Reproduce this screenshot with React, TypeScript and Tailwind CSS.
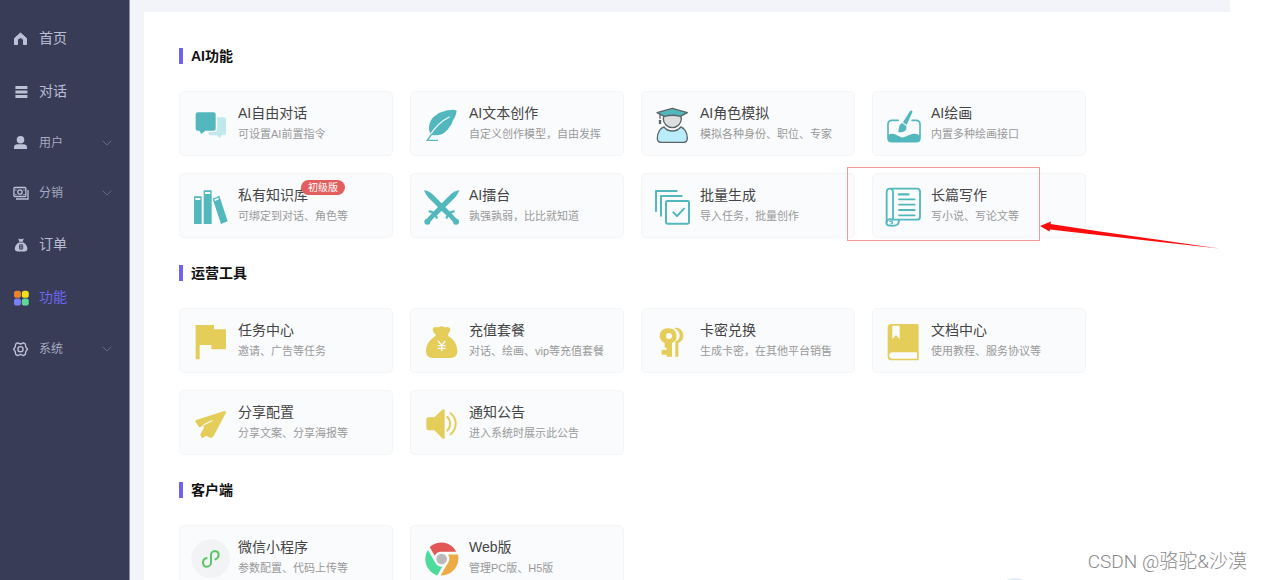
import { ReactNode } from 'react';
import { ChevronDown } from 'lucide-react';

type NavItem = {
    label: string;
    icon: ReactNode;
    active?: boolean;
    expandable?: boolean;
};

type Feature = {
    title: string;
    desc: string;
    icon: ReactNode;
    badge?: string;
    highlighted?: boolean;
};

const TEAL = '#53b8be';
const GOLD = '#e5cd5a';

const navItems: NavItem[] = [
    {
        label: '首页',
        icon: (
            <path
                fill="currentColor"
                stroke="currentColor"
                strokeLinejoin="round"
                d="M7.5 2 1.500 7.300V13.500h3V9.800a3 3 0 0 1 6 0v3.700h3V7.300z"
            />
        ),
    },
    {
        label: '对话',
        icon: (
            <path
                fill="currentColor"
                d="M2.400 2h12v3h-12zM2.400 6.500h12v3h-12zM2.400 11h12v3h-12z"
            />
        ),
    },
    {
        label: '用户',
        expandable: true,
        icon: (
            <g fill="currentColor">
                <circle cx="7.5" cy="4.8" r="3.8" />
                <path d="M1 14v-2c0-1.800 1.600-2.800 3.400-2.800h6.200c1.800 0 3.400 1 3.400 2.800v2z" />
            </g>
        ),
    },
    {
        label: '分销',
        expandable: true,
        icon: (
            <g fill="none" stroke="currentColor" strokeWidth="1.3">
                <rect x="0.900" y="2.500" width="12" height="9" rx="1" />
                <path d="M15 5v9H3" />
                <circle cx="6.900" cy="7" r="2.200" />
                <path d="M2.800 4.600v1M11 4.600v1M2.800 9v1M11 9v1" />
            </g>
        ),
    },
    {
        label: '订单',
        icon: (
            <>
                <path
                    fill="currentColor"
                    d="M5.300 1.500 8 2.200l2.700-.7-1 3.200H6.300zM5.800 5.500h4.600c2.400 1.500 4 4 4 6 0 2-1.200 3-3 3H4.800c-1.800 0-3-1-3-3 0-2 1.600-4.500 4-6z"
                />
                <path
                    fill="none"
                    stroke="#393c57"
                    strokeWidth="0.8"
                    d="M6.500 7.800h3.200v4.200H6.500zM6.500 9.900h3.200M8.100 7.800V13"
                />
            </>
        ),
    },
    {
        label: '功能',
        active: true,
        icon: (
            <>
                <rect x="1" y="0.800" width="7" height="7" rx="2.600" fill="#e98528" />
                <rect x="8.800" y="0.800" width="7" height="7" rx="2.600" fill="#efe01c" />
                <rect x="1" y="8.500" width="7" height="7" rx="2.600" fill="#7b7ef5" />
                <rect x="8.800" y="8.500" width="7" height="7" rx="2.600" fill="#5fd896" />
            </>
        ),
    },
    {
        label: '系统',
        expandable: true,
        icon: (
            <g fill="none" stroke="currentColor" strokeWidth="1.4" strokeLinejoin="round">
                <path d="M4.600 1.800 7.500 3l2.900-1.200 1.900 1.200.5 2.800 1.700 2.400-1.700 2.400-.5 2.800-1.900 1.200-2.900-1.200-2.900 1.200-1.900-1.200-.5-2.800L.7 8.200l1.500-2.400.5-2.800z" />
                <circle cx="7.500" cy="8.200" r="2.600" />
            </g>
        ),
    },
];

const Sword = () => (
    <>
        <path d="M9 12C18 14 28 19 34 24L90 80 80 92 24 37C18 30 12 21 9 12z" />
        <path
            d="M77 95c1-5 4-4 7-7s5-7 6-9 4-2 8-3"
            fill="none"
            stroke={TEAL}
            strokeWidth="7"
            strokeLinecap="round"
        />
        <path
            d="M84 84 105 107"
            fill="none"
            stroke={TEAL}
            strokeWidth="14"
            strokeLinecap="round"
        />
        <circle cx="105" cy="107" r="9" />
    </>
);

const aiFeatures: Feature[] = [
    {
        title: 'AI自由对话',
        desc: '可设置AI前置指令',
        icon: (
            <>
                <path
                    fill="#bfe9ec"
                    d="M82 40h20q6 0 6 6v42q0 6-6 6h-7l-6 8-9-8H62q-6 0-6-6v-4h19q7 0 7-7z"
                />
                <path
                    fill={TEAL}
                    d="M23 25h48q6 0 6 6v43q0 6-6 6H46l-12 10-6-10h-5q-6 0-6-6V31q0-6 6-6z"
                />
            </>
        ),
    },
    {
        title: 'AI文本创作',
        desc: '自定义创作模型，自由发挥',
        icon: (
            <>
                <path
                    fill={TEAL}
                    d="M107 20C98 15 89 19 82 19 74 19 70 23 62 24 52 26 48 32 41 36 29 46 21 62 25 82L30 92C38 95 48 94 57 92 68 90 72 84 76 80 83 76 84 69 88 65 95 59 93 51 98 46 103 39 105 30 107 20z"
                />
                <path
                    fill="none"
                    stroke="#fafbfd"
                    strokeWidth="3.500"
                    d="M86 38C62 50 42 70 26 94"
                />
                <path
                    fill="none"
                    stroke={TEAL}
                    strokeWidth="4"
                    d="M32 90 19 109H51"
                />
            </>
        ),
    },
    {
        title: 'AI角色模拟',
        desc: '模拟各种身份、职位、专家',
        icon: (
            <g stroke="#5b6468" strokeWidth="4" strokeLinejoin="round">
                <circle cx="61" cy="44" r="27" fill="#dedede" />
                <path
                    fill="#b9edfb"
                    d="M36 69c12 16 38 16 50 0 12 3 20 18 20 34 0 8-4 12-11 12H27c-7 0-11-4-11-12 0-16 8-31 20-34z"
                />
                <path fill={TEAL} d="M15 26 61 13l45 13-21 11c-15-4-33-4-48 0z" />
                <path fill="none" d="M24 29v15" />
                <path fill="none" strokeWidth="7" d="M24 48v12" />
            </g>
        ),
    },
    {
        title: 'AI绘画',
        desc: '内置多种绘画接口',
        icon: (
            <>
                <path
                    fill="none"
                    stroke={TEAL}
                    strokeWidth="5"
                    strokeLinecap="round"
                    d="M46 49H27q-12 0-12 12v40q0 12 12 12h72q12 0 12-12V61q0-12-12-12H87"
                />
                <path
                    fill={TEAL}
                    d="M15 93c14-8 24-1 33 4 12 7 20 1 28-3 12-6 24-7 35 0v10q0 10-12 10H27q-12 0-12-10z"
                />
                <path
                    fill={TEAL}
                    d="M81 21c4-4 9-1 7 4L71 63l-11-8zM57 57l13 9c3 15-9 21-25 18 4-6 0-20 12-27z"
                />
            </>
        ),
    },
    {
        title: '私有知识库',
        desc: '可绑定到对话、角色等',
        badge: '初级版',
        icon: (
            <>
                <path
                    fill={TEAL}
                    d="M12 31h23v83H12zM41 13h24v101H41zM68 38l20-9 25 77-20 8z"
                />
                <path fill="#fafbfd" d="M16 36h15v6H16zM45 18h16v6H45zM73 40l12-5 2 5-12 5z" />
            </>
        ),
    },
    {
        title: 'AI擂台',
        desc: '孰强孰弱，比比就知道',
        icon: (
            <g fill={TEAL}>
                <Sword />
                <g transform="translate(124 0) scale(-1 1)">
                    <Sword />
                </g>
            </g>
        ),
    },
    {
        title: '批量生成',
        desc: '导入任务，批量创作',
        icon: (
            <g
                fill="none"
                stroke={TEAL}
                strokeWidth="6"
                strokeLinecap="round"
                strokeLinejoin="round">
                <path d="M12 75V15H74M27 89V30H89M64 79l11 11 21-22" />
                <rect x="42" y="45" width="69" height="68" rx="4" />
            </g>
        ),
    },
    {
        title: '长篇写作',
        desc: '写小说、写论文等',
        highlighted: true,
        icon: (
            <g
                fill="none"
                stroke={TEAL}
                strokeWidth="5.500"
                strokeLinecap="round"
                strokeLinejoin="round">
                <path d="M19 8h83q9 0 9 9v75q0 9-9 9H30V19Q30 8 20 8 11 8 11 19v90" />
                <path d="M29 101c-11-4-19 2-19 9 0 11 19 11 31 7 6-3 7-9 7-15" />
                <path d="M21 106c8-2 10 7 3 8" strokeWidth="4" />
                <path d="M48 25h28" strokeWidth="7" />
                <path d="M48 40h47M48 56h47M48 72h47M48 88h47" />
            </g>
        ),
    },
];

const operationTools: Feature[] = [
    {
        title: '任务中心',
        desc: '邀请、广告等任务',
        icon: <path fill={GOLD} d="M17 12h55v13h36v60H64V72H29v43H17z" />,
    },
    {
        title: '充值套餐',
        desc: '对话、绘画、vip等充值套餐',
        icon: (
            <>
                <path
                    fill={GOLD}
                    d="M38 20c7-5 11 1 16-2s10-3 15 0 10-3 16 2c6 4 1 14-4 20v5c18 10 28 24 28 46q0 20-20 20H35q-20 0-20-20c0-22 12-36 29-46v-5c-8-6-12-15-6-20z"
                />
                <path
                    fill="none"
                    stroke="#fafbfd"
                    strokeWidth="4"
                    d="m51 60 11 13 11-13M62 73v17M50 74h24M50 82h24"
                />
            </>
        ),
    },
    {
        title: '卡密兑换',
        desc: '生成卡密，在其他平台销售',
        icon: (
            <>
                <path
                    fill={GOLD}
                    fillRule="evenodd"
                    d="M51 22a23 23 0 0 1 9 44v41H44v-6H29V86h15v-6h-6V66a23 23 0 0 1 13-44zm0 14a9 9 0 1 0 0 18 9 9 0 0 0 0-18z"
                />
                <path
                    fill={GOLD}
                    d="M66 21c16-3 28 8 28 24 0 10-6 17-15 21v41H70V61c9-3 13-9 13-17 0-10-6-18-17-23z"
                />
            </>
        ),
    },
    {
        title: '文档中心',
        desc: '使用教程、服务协议等',
        icon: (
            <>
                <path
                    fill={GOLD}
                    d="M25 9h77q5 0 5 5v104H25q-11 0-11-11V20Q14 9 25 9z"
                />
                <path
                    fill="#fafbfd"
                    d="M28 14h22v41l-11-13-11 13zM27 94h75v19H27c-11 0-11-19 0-19z"
                />
            </>
        ),
    },
    {
        title: '分享配置',
        desc: '分享文案、分享海报等',
        icon: (
            <>
                <path
                    fill={GOLD}
                    stroke={GOLD}
                    strokeWidth="8"
                    strokeLinejoin="round"
                    d="M104 28 20 55l9 13 22-2-16 29 3 6 10-8 14 8 6-5z"
                />
                <path
                    fill="none"
                    stroke="#fafbfd"
                    strokeWidth="3.500"
                    strokeLinecap="round"
                    d="M66 53 47 62 31 75"
                />
            </>
        ),
    },
    {
        title: '通知公告',
        desc: '进入系统时展示此公告',
        icon: (
            <>
                <path
                    fill={GOLD}
                    d="M22 43h18l24-23q7-5 7 2v82q0 7-7 2L40 82H22q-6 0-6-6V49q0-6 6-6z"
                />
                <path
                    fill="none"
                    stroke={GOLD}
                    strokeWidth="6"
                    strokeLinecap="round"
                    d="M79 42c11 11 11 30 0 41M89 31c20 17 20 46 0 63"
                />
            </>
        ),
    },
];

const CHROME_SECTOR = 'M26 27A51 51 0 0 1 106 41H62A22 22 0 0 0 41 53z';

const clients: Feature[] = [
    {
        title: '微信小程序',
        desc: '参数配置、代码上传等',
        icon: (
            <>
                <circle cx="62" cy="62" r="58" fill="#f1f3f4" />
                <path
                    fill="none"
                    stroke="#5bc568"
                    strokeWidth="6"
                    strokeLinecap="round"
                    d="M50 60c-16 4-13 26 0 26 8 0 13-6 13-12V51c0-6 5-12 12-12 14 1 15 20 1 25"
                />
            </>
        ),
    },
    {
        title: 'Web版',
        desc: '管理PC版、H5版',
        icon: (
            <>
                <path fill="#e25656" d={CHROME_SECTOR} />
                <path fill="#ecab45" d={CHROME_SECTOR} transform="rotate(120 62 63)" />
                <path fill="#4cdb9b" d={CHROME_SECTOR} transform="rotate(240 62 63)" />
                <circle cx="62" cy="63" r="20" fill="#fafbfd" />
                <circle cx="62" cy="63" r="16" fill="#bababa" />
            </>
        ),
    },
];

const sections = [
    { title: 'AI功能', items: aiFeatures },
    { title: '运营工具', items: operationTools },
    { title: '客户端', items: clients },
];

function Sidebar() {
    return (
        <nav className="w-[130px] shrink-0 border-r border-[#8e90a3] bg-[#393c57] pt-3">
            {navItems.map(({ label, icon, active, expandable }) => (
                <a
                    key={label}
                    href="#"
                    className={`flex items-center pr-[14px] pl-[13px] ${
                        expandable
                            ? 'h-[50px] text-[12px] text-[#a6abc2]'
                            : 'h-[53px] text-[14px] text-[#b9bdd3]'
                    }`}>
                    <svg
                        viewBox="0 0 16 16"
                        className="mr-[10px] size-4 shrink-0 text-[#bdc1d6]">
                        {icon}
                    </svg>
                    <span className={active ? 'text-[#6c66ee]' : ''}>{label}</span>
                    {expandable && (
                        <ChevronDown
                            className="ml-auto size-4 text-[#666b84]"
                            strokeWidth={1.5}
                        />
                    )}
                </a>
            ))}
        </nav>
    );
}

function Highlight() {
    return (
        <>
            <span className="pointer-events-none absolute -top-[7px] -left-[26px] z-10 h-[74px] w-[193px] border border-[#f29a9a]" />
            <svg
                viewBox="0 0 180 30"
                className="pointer-events-none absolute top-[46px] left-[167px] z-10 h-[30px] w-[180px]">
                <path
                    fill="#fb0d0d"
                    d="M0 6 11 1.500 10.500 4 60 11.500 120 20 179 28.500 118 21.800 58 15 10 9.500 9.500 11.500z"
                />
            </svg>
        </>
    );
}

function FeatureCard({ title, desc, icon, badge, highlighted }: Feature) {
    return (
        <a
            href="#"
            className="relative flex h-[65px] items-center gap-2 rounded-[5px] border border-[#f3f5f7] bg-[#fafbfd] px-[10px]">
            <svg viewBox="0 0 120 120" className="size-10 shrink-0 overflow-visible">
                {icon}
            </svg>
            <div className="min-w-0 pt-px leading-[21px] whitespace-nowrap">
                <h3 className="text-[14px] text-[#444]">{title}</h3>
                <p className="text-[11px] text-[#999]">{desc}</p>
            </div>
            {badge && (
                <span className="absolute top-[6px] left-[121px] rounded-full bg-[#e35f5f] px-[7px] text-[10px] leading-[15px] text-white">
                    {badge}
                </span>
            )}
            {highlighted && <Highlight />}
        </a>
    );
}

export default function App() {
    return (
        <div className="relative flex h-screen overflow-hidden bg-white font-['Liberation_Sans','Noto_Sans_CJK_SC',sans-serif]">
            <Sidebar />
            <main className="mr-[33px] min-w-0 flex-1 bg-[#f3f4fa] pt-3 pl-[14px]">
                <div className="flex min-h-full flex-col gap-[23px] bg-white px-[35px] pt-8">
                    {sections.map((section) => (
                        <section key={section.title} className="flex flex-col gap-[23px]">
                            <h2 className="flex h-6 items-center gap-2 text-[14px] font-bold text-[#111]">
                                <span className="h-4 w-1 bg-[#6c63f0]" />
                                {section.title}
                            </h2>
                            <div className="grid grid-cols-[repeat(auto-fill,214px)] gap-[17px]">
                                {section.items.map((item) => (
                                    <FeatureCard key={item.title} {...item} />
                                ))}
                            </div>
                        </section>
                    ))}
                </div>
            </main>
            <span className="absolute right-[228px] -bottom-[38px] size-10 rounded-full bg-[#e3edf6]" />
            <p className="absolute right-4 bottom-[5px] font-['Roboto','Noto_Sans_CJK_SC',sans-serif] text-[19px] leading-[26px] font-light text-[#8a8a8a]">
                CSDN @骆驼&amp;沙漠
            </p>
        </div>
    );
}
